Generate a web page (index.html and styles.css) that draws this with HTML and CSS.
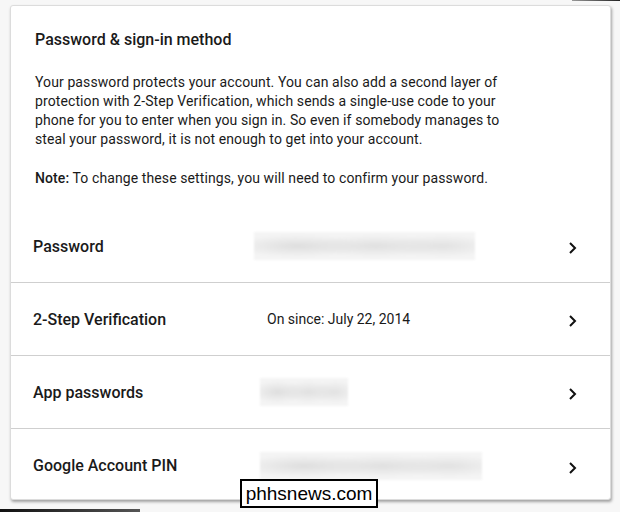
FILE: index.html
```html
<!DOCTYPE html>
<html lang="en">
<head>
  <meta charset="UTF-8" />
  <title>Password &amp; sign-in method</title>
  <link rel="stylesheet" href="styles.css">
</head>
<body>

<div class="card">
  <div class="intro">
    <h2>Password &amp; sign-in method</h2>
    <p>Your password protects your account. You can also add a second layer of protection with 2-Step Verification, which sends a single-use code to your phone for you to enter when you sign in. So even if somebody manages to steal your password, it is not enough to get into your account.</p>
    <p class="note"><b>Note:</b> To change these settings, you will need to confirm your password.</p>
  </div>

  <div class="rows">
    <div class="row">
      <div class="label">Password</div>
      <div class="value"><span class="blur" style="width:221px"></span></div>
      <svg class="chev" width="10" height="14" viewBox="0 0 10 14"><polyline points="2,2 7,7 2,12" fill="none" stroke="#111" stroke-width="2"/></svg>
    </div>
    <div class="row">
      <div class="label">2-Step Verification</div>
      <div class="value"><span class="text">On since: July 22, 2014</span></div>
      <svg class="chev" width="10" height="14" viewBox="0 0 10 14"><polyline points="2,2 7,7 2,12" fill="none" stroke="#111" stroke-width="2"/></svg>
    </div>
    <div class="row">
      <div class="label">App passwords</div>
      <div class="value"><span class="blur short" style="width:88px"></span></div>
      <svg class="chev" width="10" height="14" viewBox="0 0 10 14"><polyline points="2,2 7,7 2,12" fill="none" stroke="#111" stroke-width="2"/></svg>
    </div>
    <div class="row">
      <div class="label">Google Account PIN</div>
      <div class="value"><span class="blur short" style="width:222px"></span></div>
      <svg class="chev" width="10" height="14" viewBox="0 0 10 14"><polyline points="2,2 7,7 2,12" fill="none" stroke="#111" stroke-width="2"/></svg>
    </div>
  </div>
</div>

<div class="watermark">phhsnews.com</div>
<div class="edge edge-top"></div>
<div class="edge edge-bottom"></div>

</body>
</html>
```

FILE: styles.css
```css
body {
  margin: 0;
  background: #f7f7f7;
  font-family: Roboto, Arial, sans-serif;
  color: #1a1a1a;
  width: 620px;
  height: 512px;
  overflow: hidden;
  position: relative;
}
.card {
  margin: 5px 0 0 10px;
  width: 601px;
  height: 495px;
  background: #fff;
  border: 1px solid #dcdcdc;
  border-radius: 3px;
  box-shadow: 1px 2px 3px rgba(0,0,0,0.35);
  box-sizing: border-box;
  overflow: hidden;
}
.intro {
  padding: 24px 90px 0 24px;
}
h2 {
  font-size: 16px;
  font-weight: 500;
  line-height: 20px;
  margin: 0 0 23px;
}
p {
  font-size: 14px;
  line-height: 19px;
  letter-spacing: 0.1px;
  margin: 0;
}
.note {
  margin-top: 20px;
}
.note b {
  font-weight: 500;
}
.rows {
  margin-top: 22px;
}
.row {
  display: flex;
  align-items: center;
  height: 73px;
  border-bottom: 1px solid #cfcfcf;
  padding: 0 32px 0 22px;
  box-sizing: border-box;
}
.row:last-child {
  border-bottom: none;
}
.label {
  width: 221px;
  font-size: 16px;
  font-weight: 500;
}
.value {
  flex: 1;
  font-size: 14px;
}
.value .text {
  padding-left: 13px;
}
.blur {
  display: block;
  height: 28px;
  background:
    radial-gradient(ellipse 30% 40% at 20% 50%, #dedede, transparent),
    radial-gradient(ellipse 30% 40% at 55% 50%, #e0e0e0, transparent),
    radial-gradient(ellipse 25% 40% at 85% 50%, #e2e2e2, transparent),
    #f4f4f4;
  filter: blur(1px);
}
.blur.short {
  margin-left: 6px;
}
.chev {
  display: block;
  margin-top: 4px;
}
.watermark {
  position: absolute;
  left: 240px;
  top: 479px;
  width: 134px;
  height: 25px;
  border: 2px solid #000;
  background: #fff;
  font-family: "Liberation Sans", Arial, sans-serif;
  font-size: 19px;
  line-height: 25px;
  text-align: center;
  color: #000;
}
.edge {
  position: absolute;
  height: 3px;
  background: linear-gradient(90deg, #111, #555);
}
.edge-top {
  top: 0;
  left: 572px;
  width: 48px;
  height: 1px;
  background: linear-gradient(90deg, #999, #222);
}
.edge-bottom {
  bottom: 0;
  left: 0;
  width: 140px;
}
```
